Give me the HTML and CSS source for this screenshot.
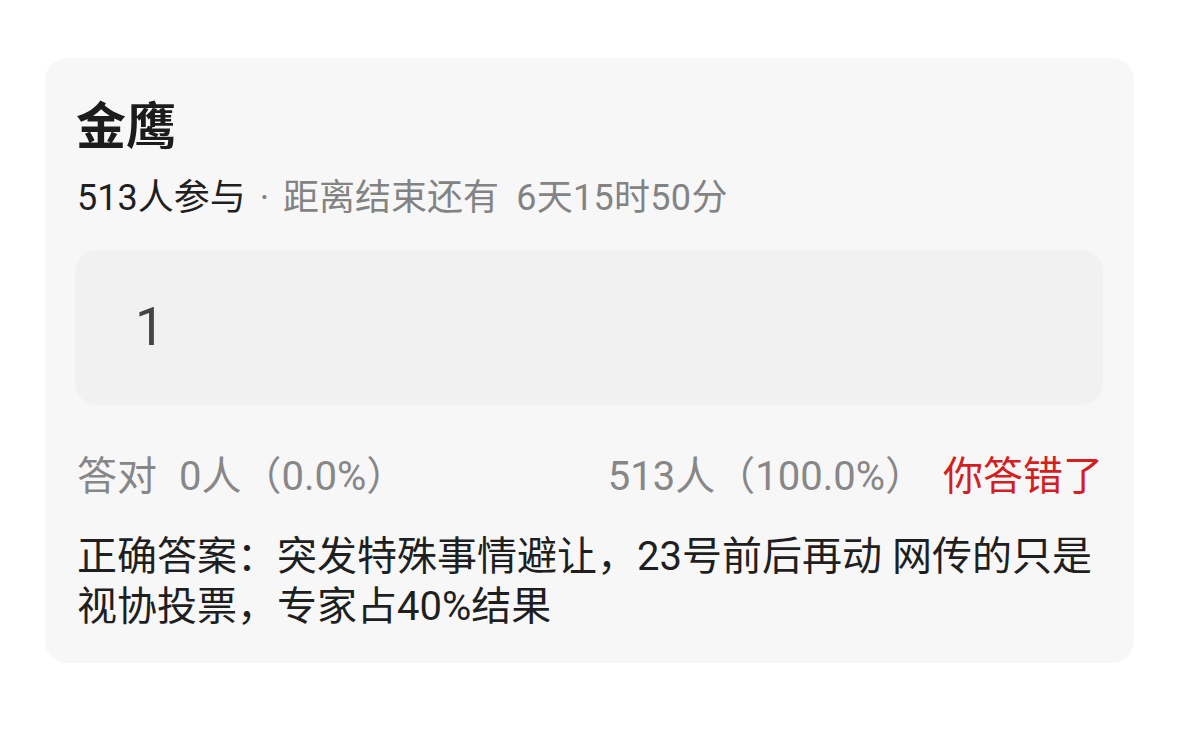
FILE: index.html
```html
<!DOCTYPE html>
<html lang="zh">
<head>
<meta charset="utf-8">
<link rel="stylesheet" href="styles.css">
</head>
<body>
<div class="page">
  <div class="card">
    <div class="title">金鹰</div>
    <div class="meta"><span class="meta-strong">513人参与</span><span class="dot">·</span>距离结束还有<span class="time">6天15时50分</span></div>
    <div class="answer-box">1</div>
    <div class="stats">
      <div class="stats-left">答对<span class="count">0人（0.0%）</span></div>
      <div class="stats-right"><span>513人（100.0%）</span><span class="wrong">你答错了</span></div>
    </div>
    <div class="correct">正确答案：突发特殊事情避让，23号前后再动 网传的只是视协投票，专家占40%结果</div>
  </div>
</div>
</body>
</html>
```
FILE: styles.css
```css
html, body {
  margin: 0;
  padding: 0;
  background: #ffffff;
}
body {
  font-family: "Roboto", "Noto Sans CJK SC", sans-serif;
  width: 1179px;
  height: 741px;
  overflow: hidden;
}
.page {
  padding: 58px 45px 0 45px;
}
.card {
  background: #f7f7f7;
  border-radius: 22px;
  height: 605px;
  box-sizing: border-box;
  padding: 32px 31px 0 30px;
}
.title {
  font-family: "Noto Sans CJK SC", sans-serif;
  font-size: 50px;
  font-weight: 700;
  color: #1c1c1c;
  line-height: 64px;
  padding-left: 1px;
}
.meta {
  margin-top: 21px;
  font-size: 36px;
  line-height: 46px;
  color: #838383;
  padding-left: 2px;
}
.meta-strong {
  color: #1f1f1f;
}
.dot {
  margin: 0 14px 0 14px;
}
.time {
  margin-left: 17px;
  letter-spacing: 0.3px;
}
.answer-box {
  margin-top: 29px;
  height: 155px;
  background: #f1f1f1;
  border-radius: 22px;
  box-sizing: border-box;
  padding-left: 60px;
  display: flex;
  align-items: center;
  font-size: 53px;
  color: #444444;
  line-height: 1;
}
.stats {
  margin-top: 44px;
  display: flex;
  justify-content: space-between;
  font-size: 40px;
  line-height: 56px;
  color: #878787;
  padding-left: 2px;
}
.count {
  margin-left: 22px;
}
.stats-right {
  display: flex;
  gap: 18px;
}
.wrong {
  color: #d31f1f;
}
.correct {
  margin-top: 27px;
  font-size: 40px;
  line-height: 50px;
  color: #1f1f1f;
  padding-left: 2px;
}
```
